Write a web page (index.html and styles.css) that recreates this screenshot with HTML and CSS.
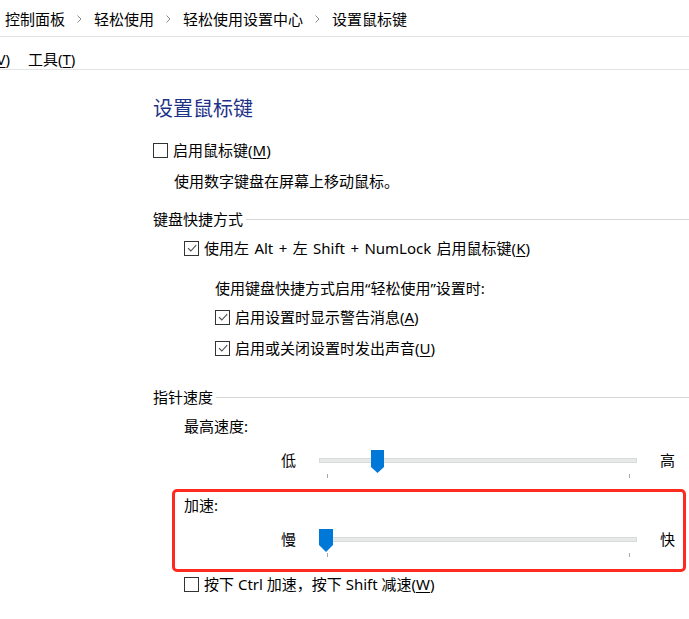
FILE: index.html
```html
<!DOCTYPE html>
<html lang="zh-CN">
<head>
<meta charset="utf-8">
<title>设置鼠标键</title>
<link rel="stylesheet" href="styles.css">
</head>
<body>
<nav class="breadcrumb">
  <span class="crumb">控制面板</span>
  <svg class="chev" width="5" height="8" viewBox="0 0 5 8"><path d="M0.5 0.5 L4 4 L0.5 7.5" fill="none" stroke="#8a8a8a" stroke-width="1"/></svg>
  <span class="crumb">轻松使用</span>
  <svg class="chev" width="5" height="8" viewBox="0 0 5 8"><path d="M0.5 0.5 L4 4 L0.5 7.5" fill="none" stroke="#8a8a8a" stroke-width="1"/></svg>
  <span class="crumb">轻松使用设置中心</span>
  <svg class="chev" width="5" height="8" viewBox="0 0 5 8"><path d="M0.5 0.5 L4 4 L0.5 7.5" fill="none" stroke="#8a8a8a" stroke-width="1"/></svg>
  <span class="crumb">设置鼠标键</span>
</nav>
<div class="menubar">
  <span class="menu-item first">查看(<u>V</u>)</span>
  <span class="menu-item">工具(<u>T</u>)</span>
</div>
<main class="content">
  <h1 class="title">设置鼠标键</h1>

  <label class="cb-row">
    <span class="box"></span>
    <span>启用鼠标键(<u>M</u>)</span>
  </label>
  <p class="desc">使用数字键盘在屏幕上移动鼠标。</p>

  <div class="section">
    <span class="section-title">键盘快捷方式</span>
    <span class="rule"></span>
  </div>
  <label class="cb-row indent1 gap-k">
    <span class="box"><svg width="12" height="12" viewBox="0 0 12 12"><path d="M2 6.2 L4.8 9 L10.2 3.2" fill="none" stroke="#4a4a4a" stroke-width="1.1"/></svg></span>
    <span class="wide">使用左 Alt + 左 Shift + NumLock 启用鼠标键(<u>K</u>)</span>
  </label>
  <p class="subtext">使用键盘快捷方式启用“轻松使用”设置时:</p>
  <label class="cb-row indent2 gap-a">
    <span class="box"><svg width="12" height="12" viewBox="0 0 12 12"><path d="M2 6.2 L4.8 9 L10.2 3.2" fill="none" stroke="#4a4a4a" stroke-width="1.1"/></svg></span>
    <span>启用设置时显示警告消息(<u>A</u>)</span>
  </label>
  <label class="cb-row indent2 gap-u">
    <span class="box"><svg width="12" height="12" viewBox="0 0 12 12"><path d="M2 6.2 L4.8 9 L10.2 3.2" fill="none" stroke="#4a4a4a" stroke-width="1.1"/></svg></span>
    <span>启用或关闭设置时发出声音(<u>U</u>)</span>
  </label>

  <div class="section gap-speed">
    <span class="section-title">指针速度</span>
    <span class="rule"></span>
  </div>
  <p class="field-label">最高速度:</p>
  <div class="slider-row">
    <span class="slider-min">低</span>
    <div class="slider">
      <div class="track"></div>
      <span class="tick tick-left"></span>
      <span class="tick tick-right"></span>
      <svg class="thumb" style="left:52px" width="13" height="23" viewBox="0 0 13 23"><path d="M0 0 H13 V17 L6.5 23 L0 17 Z" fill="#0078d7"/></svg>
    </div>
    <span class="slider-max">高</span>
  </div>

  <div class="highlight">
    <p class="field-label-inner">加速:</p>
    <div class="slider-row inner">
      <span class="slider-min">慢</span>
      <div class="slider">
        <div class="track"></div>
        <span class="tick tick-left"></span>
        <span class="tick tick-right"></span>
        <svg class="thumb" style="left:0px" width="14" height="23" viewBox="0 0 14 23"><path d="M0 0 H14 V16 L7 23 L0 16 Z" fill="#0078d7"/></svg>
      </div>
      <span class="slider-max">快</span>
    </div>
  </div>

  <label class="cb-row indent1 gap-w">
    <span class="box"></span>
    <span>按下 Ctrl 加速，按下 Shift 减速(<u>W</u>)</span>
  </label>
</main>
</body>
</html>
```
FILE: styles.css
```css
html, body {
  margin: 0;
  padding: 0;
  background: #ffffff;
}
body {
  width: 689px;
  height: 619px;
  overflow: hidden;
  font-family: "Noto Sans", "Noto Sans CJK SC", sans-serif;
  font-size: 15px;
  color: #000;
}
u { text-decoration: underline; text-underline-offset: 2px; }
p, h1 { margin: 0; }

.breadcrumb {
  height: 37px;
  box-sizing: border-box;
  padding: 9px 0 0 5px;
  border-bottom: 1px solid #e3e3e3;
  display: flex;
  align-items: flex-start;
  line-height: 20px;
  white-space: nowrap;
}
.chev {
  margin: 6px 12px 0 12px;
}

.menubar {
  height: 33px;
  box-sizing: border-box;
  padding-top: 12px;
  border-bottom: 1px solid #e3e3e3;
  display: flex;
  line-height: 20px;
  white-space: nowrap;
}
.menu-item.first {
  width: 60px;
  margin-left: -50px;
  text-align: right;
}
.menu-item + .menu-item { margin-left: 18px; }

.content {
  padding-left: 153px;
}
.title {
  margin-top: 27px;
  font-size: 20px;
  line-height: 24px;
  font-weight: normal;
  color: #1e3287;
}
.cb-row {
  display: flex;
  align-items: center;
  height: 20px;
  line-height: 20px;
  margin-top: 19px;
  white-space: nowrap;
}
.wide { word-spacing: 1.5px; }
.box {
  width: 15px;
  height: 15px;
  box-sizing: border-box;
  border: 1px solid #333;
  margin-right: 5px;
  display: flex;
  align-items: center;
  justify-content: center;
  flex: none;
}
.desc {
  margin: 11px 0 0 21px;
  line-height: 20px;
}
.section {
  display: flex;
  align-items: center;
  height: 20px;
  margin-top: 18px;
}
.section-title { line-height: 20px; white-space: nowrap; }
.rule {
  flex: 1;
  height: 1px;
  background: #d6d6d6;
  margin-left: 3px;
}
.indent1 { margin-left: 31px; }
.indent2 { margin-left: 62px; }
.gap-k { margin-top: 9px; }
.subtext {
  margin: 20px 0 0 62px;
  line-height: 20px;
}
.gap-a { margin-top: 9px; }
.gap-u { margin-top: 11px; }
.gap-speed { margin-top: 29px; }
.field-label {
  margin: 9px 0 0 31px;
  line-height: 20px;
}

.slider-row {
  display: flex;
  align-items: flex-start;
  height: 32px;
  margin: 12px 0 0 31px;
}
.slider-min {
  width: 112px;
  text-align: right;
  line-height: 20px;
  margin-top: 2px;
}
.slider {
  position: relative;
  width: 318px;
  height: 32px;
  margin-left: 23px;
}
.track {
  position: absolute;
  left: 0;
  right: 0;
  top: 10px;
  height: 5px;
  box-sizing: border-box;
  background: #e7e9e9;
  border: 1px solid #d9dbdb;
}
.tick {
  position: absolute;
  top: 26px;
  width: 1px;
  height: 4px;
  background: #a8a8a8;
}
.tick-left { left: 8px; }
.tick-right { left: 310px; }
.thumb {
  position: absolute;
  top: 2px;
}
.slider-max {
  margin-left: 23px;
  line-height: 20px;
  margin-top: 2px;
}

.highlight {
  width: 514px;
  box-sizing: border-box;
  margin: 9px 0 0 19px;
  border: 3px solid #ff2a1f;
  border-radius: 5px;
  padding: 3px 0 10px 9px;
}
.field-label-inner {
  line-height: 20px;
}
.slider-row.inner {
  margin: 12px 0 0 0;
}
.gap-w { margin-top: 2px; }
```
